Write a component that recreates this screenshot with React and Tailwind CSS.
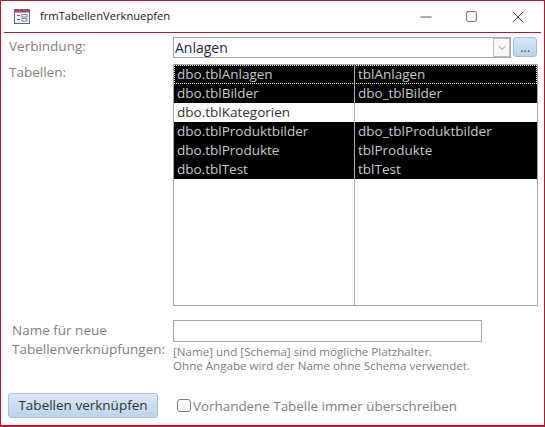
import { Minus, Square, X, ChevronDown } from "lucide-react";

const rows = [
  { name: "dbo.tblAnlagen", link: "tblAnlagen", selected: true, focus: true },
  { name: "dbo.tblBilder", link: "dbo_tblBilder", selected: true },
  { name: "dbo.tblKategorien", link: "" },
  { name: "dbo.tblProduktbilder", link: "dbo_tblProduktbilder", selected: true },
  { name: "dbo.tblProdukte", link: "tblProdukte", selected: true },
  { name: "dbo.tblTest", link: "tblTest", selected: true },
];

// small access form icon from the title bar
const FormIcon = () => (
  <svg width="16" height="15" viewBox="0 0 16 15" className="shrink-0">
    <rect x="0.5" y="0.5" width="15" height="14" fill="#f4f4f8" stroke="#5a6690" />
    <rect x="1" y="1" width="14" height="2.5" fill="#b5405a" />
    <path d="M3 6.5h3M3 10.5h3" stroke="#5a6690" />
    <rect x="8" y="5.5" width="5" height="2.5" fill="#fff" stroke="#5a6690" strokeWidth="0.8" />
    <rect x="8" y="9.5" width="5" height="2.5" fill="#fff" stroke="#5a6690" strokeWidth="0.8" />
  </svg>
);

export default function App() {
  return (
    <div
      className="w-[545px] h-[427px] bg-white border border-[#b5182d] border-b-2 flex flex-col overflow-hidden text-[13.5px] text-[#7f7f7f]"
      style={{ fontFamily: '"Open Sans", "Noto Sans", sans-serif' }}
    >
      {/* title bar */}
      <div className="h-[31px] mx-[3px] border-b border-[#b5182d] flex items-center shrink-0 box-content">
        <div className="ml-[10px] mr-[10px]">
          <FormIcon />
        </div>
        <span className="text-[11.2px] text-[#1a1a1a]">frmTabellenVerknuepfen</span>
        <div className="ml-auto flex items-center gap-[30px] pr-[13px] text-[#222]">
          <Minus size={18} strokeWidth={1} />
          <Square size={13} strokeWidth={1.2} />
          <X size={20} strokeWidth={1} />
        </div>
      </div>

      {/* Verbindung */}
      <div className="flex mt-[4px] pl-[8px] h-[21px] shrink-0">
        <div className="w-[164px] leading-[19px]">Verbindung:</div>
        <div className="w-[338px] border border-[#a6a6a6] flex items-center justify-between">
          <span className="pl-[1px] text-[#1f2a44] text-[14px]">Anlagen</span>
          <div className="w-[17px] h-[19px] border border-[#bdbdbd] bg-[#f8f8f8] flex items-center justify-center">
            <ChevronDown size={12} strokeWidth={1.2} className="text-[#444]" />
          </div>
        </div>
        <button className="ml-[2px] w-[24px] h-[20px] rounded-[3px] border border-[#a5c0dc] bg-gradient-to-b from-[#d8e6f5] to-[#bcd3ec] text-[#2a5a9a] text-[13px] leading-[14px]">
          ...
        </button>
      </div>

      {/* Tabellen */}
      <div className="flex mt-[6px] pl-[8px] shrink-0">
        <div className="w-[164px] leading-[17px]">Tabellen:</div>
        <div className="w-[365px] h-[242px] border border-[#a6a6a6] relative">
          <div className="absolute top-0 bottom-0 left-[180px] w-px bg-[#b0b0b0]" />
          {rows.map((r) => (
            <div
              key={r.name}
              className={`flex h-[19px] items-center text-[13.5px] ${
                r.selected ? "bg-black text-[#c8c8c8]" : "bg-white text-[#333]"
              } ${r.focus ? "outline-1 -outline-offset-1 outline-dotted outline-white" : ""}`}
            >
              <div className="w-[181px] pl-[3px] truncate">{r.name}</div>
              <div className="pl-[3px] h-full leading-[19px]">{r.link}</div>
            </div>
          ))}
        </div>
      </div>

      {/* Name */}
      <div className="flex mt-[14px] pl-[11px] shrink-0">
        <div className="w-[161px] leading-[19px] pt-[1px]">
          Name für neue
          <br />
          Tabellenverknüpfungen:
        </div>
        <div>
          <div className="w-[309px] h-[22px] border border-[#a6a6a6]" />
          <div className="mt-[3px] text-[11.6px] leading-[14px] text-[#808080]">
            [Name] und [Schema] sind mögliche Platzhalter.
            <br />
            Ohne Angabe wird der Name ohne Schema verwendet.
          </div>
        </div>
      </div>

      {/* Footer */}
      <div className="flex items-center mt-[20px] pl-[7px] shrink-0">
        <button className="w-[150px] h-[25px] rounded-[3px] border border-[#a5c0dc] bg-gradient-to-b from-[#dbe8f6] to-[#bcd3ec] text-[#333] text-[13.5px]">
          Tabellen verknüpfen
        </button>
        <div className="ml-[19px] w-[14px] h-[13px] rounded-[3px] border border-[#808080] bg-[#fafafa]" />
        <span className="ml-[2px] text-[13.4px] leading-[15px] pt-[1px]">Vorhandene Tabelle immer überschreiben</span>
      </div>
    </div>
  );
}
